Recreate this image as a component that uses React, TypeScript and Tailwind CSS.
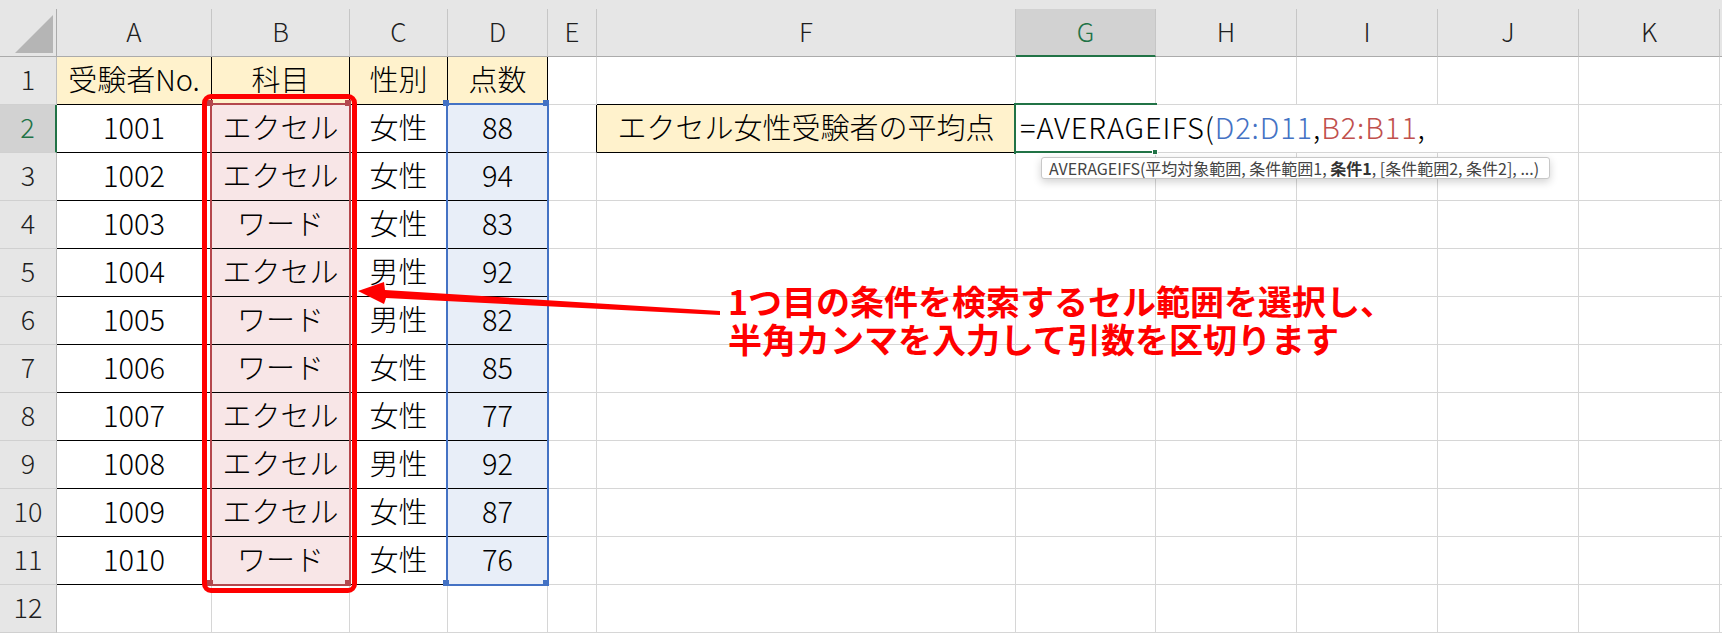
import React from "react";

const FONT = "font-['Noto_Sans_CJK_JP',sans-serif]";

const COLS = [
  { key: "A", w: "w-[155px]" },
  { key: "B", w: "w-[138px]" },
  { key: "C", w: "w-[98px]" },
  { key: "D", w: "w-[100px]" },
  { key: "E", w: "w-[49px]" },
  { key: "F", w: "w-[419px]" },
  { key: "G", w: "w-[140px]" },
  { key: "H", w: "w-[141px]" },
  { key: "I", w: "w-[141px]" },
  { key: "J", w: "w-[141px]" },
  { key: "K", w: "w-[141px]" },
  { key: "L", w: "w-[141px]" },
];

const HEAD = ["受験者No.", "科目", "性別", "点数"];

const DATA = [
  ["1001", "エクセル", "女性", "88"],
  ["1002", "エクセル", "女性", "94"],
  ["1003", "ワード", "女性", "83"],
  ["1004", "エクセル", "男性", "92"],
  ["1005", "ワード", "男性", "82"],
  ["1006", "ワード", "女性", "85"],
  ["1007", "エクセル", "女性", "77"],
  ["1008", "エクセル", "男性", "92"],
  ["1009", "エクセル", "女性", "87"],
  ["1010", "ワード", "女性", "76"],
];

// border + fill for a body cell (row is 1-based like Excel, col 0 = A)
function cellStyle(row: number, col: number) {
  const inTable = row >= 1 && row <= 11 && col <= 3;
  if (inTable) {
    let fill = "";
    if (row === 1) fill = "bg-[#fff2cc]";
    else if (col === 1) fill = "bg-[#f8e6e7]";
    else if (col === 3) fill = "bg-[#e8eef8]";
    return `border-r border-b border-black ${fill}`;
  }
  if (row === 2 && col === 4) return "border-r border-b border-r-black border-b-[#d6d6d6]";
  if (row === 1 && col === 5) return "border-r border-b border-r-[#d6d6d6] border-b-black";
  if (row === 2 && col === 5) return "border-r border-b border-black bg-[#fff2cc]";
  // formula overflows G2 -> I2, hiding the gridlines
  if (row === 2 && (col === 6 || col === 7 || col === 8)) return "border-b border-[#d6d6d6]";
  return "border-r border-b border-[#d6d6d6]";
}

function cellText(row: number, col: number): React.ReactNode {
  if (row === 1 && col <= 3) return HEAD[col];
  if (row >= 2 && row <= 11 && col <= 3) return DATA[row - 2][col];
  if (row === 2 && col === 5) return "エクセル女性受験者の平均点";
  return null;
}

function Formula() {
  return (
    <span className="absolute left-[4px] top-0 flex h-full items-center whitespace-nowrap pb-[4px] text-[29px] tracking-[0.9px] text-black">
      <span>
        =AVERAGEIFS(<span className="text-[#4472c4]">D2:D11</span>,
        <span className="text-[#c0504d]">B2:B11</span>,
      </span>
    </span>
  );
}

function HeaderRow() {
  return (
    <div className="flex h-[48px] bg-[#e6e6e6]">
      <div className="relative w-[57px] shrink-0 border-r border-b border-[#ababab]">
        <svg className="absolute left-[15px] top-[6px]" width="39" height="39" viewBox="0 0 39 39">
          <polygon points="0,38 38,38 38,0" fill="#b5b5b5" />
        </svg>
      </div>
      {COLS.map((c) =>
        c.key === "G" ? (
          <div
            key={c.key}
            className={`${c.w} shrink-0 flex items-center justify-center border-r border-r-[#c6c6c6] border-b-2 border-b-[#217346] bg-[#d2d2d2] pb-[2px] text-[26px] font-light text-[#217346]`}
          >
            {c.key}
          </div>
        ) : (
          <div
            key={c.key}
            className={`${c.w} shrink-0 flex items-center justify-center border-r border-b border-r-[#c6c6c6] border-b-[#ababab] pb-[3px] text-[26px] font-light text-[#1f1f1f]`}
          >
            {c.key}
          </div>
        )
      )}
    </div>
  );
}

function BodyRow({ row }: { row: number }) {
  const active = row === 2;
  return (
    <div className="flex h-[48px]">
      <div
        className={
          active
            ? "w-[57px] shrink-0 flex items-center justify-center border-r-2 border-b border-r-[#217346] border-b-[#d0d0d0] bg-[#d2d2d2] pb-[4px] text-[27px] font-light text-[#217346]"
            : "w-[57px] shrink-0 flex items-center justify-center border-r border-b border-r-[#bdbdbd] border-b-[#d0d0d0] bg-[#e6e6e6] pb-[4px] text-[27px] font-light text-[#1f1f1f]"
        }
      >
        {row}
      </div>
      {COLS.map((c, i) => (
        <div
          key={c.key}
          className={`${c.w} ${cellStyle(row, i)} relative shrink-0 flex items-center justify-center pb-[4px] text-[29px] font-light text-black`}
        >
          {cellText(row, i)}
          {row === 2 && i === 6 && <Formula />}
        </div>
      ))}
    </div>
  );
}

function Handle({ className }: { className: string }) {
  return <div className={`absolute h-[6px] w-[6px] ${className}`} />;
}

export default function App() {
  const rows = Array.from({ length: 12 }, (_, i) => i + 1);
  return (
    <div className={`relative h-[634px] w-[1722px] overflow-hidden bg-white leading-none ${FONT}`}>
      <div className="h-[9px] bg-[#e6e6e6]" />
      <HeaderRow />
      {rows.map((r) => (
        <BodyRow key={r} row={r} />
      ))}

      {/* referenced range B2:B11 */}
      <div className="absolute left-[210px] top-[103px] h-[483px] w-[141px] border-2 border-[#b4474d]" />
      <Handle className="left-[207px] top-[100px] bg-[#b4474d]" />
      <Handle className="left-[345px] top-[100px] bg-[#b4474d]" />
      <Handle className="left-[207px] top-[580px] bg-[#b4474d]" />
      <Handle className="left-[345px] top-[580px] bg-[#b4474d]" />

      {/* referenced range D2:D11 */}
      <div className="absolute left-[446px] top-[103px] h-[483px] w-[103px] border-2 border-[#4472c4]" />
      <Handle className="left-[443px] top-[100px] bg-[#4472c4]" />
      <Handle className="left-[543px] top-[100px] bg-[#4472c4]" />
      <Handle className="left-[443px] top-[580px] bg-[#4472c4]" />
      <Handle className="left-[543px] top-[580px] bg-[#4472c4]" />

      {/* active cell G2 */}
      <div className="absolute left-[1014px] top-[103px] h-[2px] w-[143px] bg-[#217346]" />
      <div className="absolute left-[1014px] top-[103px] h-[51px] w-[2px] bg-[#217346]" />
      <div className="absolute left-[1014px] top-[151px] h-[2px] w-[139px] bg-[#217346]" />
      <div className="absolute left-[1152px] top-[149px] h-[6px] w-[6px] border border-white bg-[#217346]" />

      {/* function tooltip */}
      <div className="absolute left-[1041px] top-[157px] flex h-[22px] w-[509px] items-center whitespace-nowrap rounded-[3px] border border-[#c8c8c8] bg-white pl-[7px] text-[16px] text-[#444] shadow-[0_3px_8px_rgba(0,0,0,0.18)]">
        <span>
          AVERAGEIFS(平均対象範囲, 条件範囲1, <b className="font-bold text-[#333]">条件1</b>, [条件範囲2, 条件2], ...)
        </span>
      </div>

      {/* red annotation frame */}
      <div className="absolute left-[202px] top-[94px] h-[499px] w-[155px] rounded-[9px] border-[5px] border-[#ff0000]" />

      {/* arrow */}
      <svg className="pointer-events-none absolute left-0 top-0" width="1722" height="634">
        <polygon
          points="358,291 384,282 385,290 720,311 720,315 386,298 384,304"
          fill="#ff0000"
        />
      </svg>

      {/* annotation text */}
      <div className="absolute left-[728px] top-[282px] text-[34px] font-bold leading-[38px] text-[#ff0000]">
        <div>1つ目の条件を検索するセル範囲を選択し、</div>
        <div>半角カンマを入力して引数を区切ります</div>
      </div>
    </div>
  );
}
